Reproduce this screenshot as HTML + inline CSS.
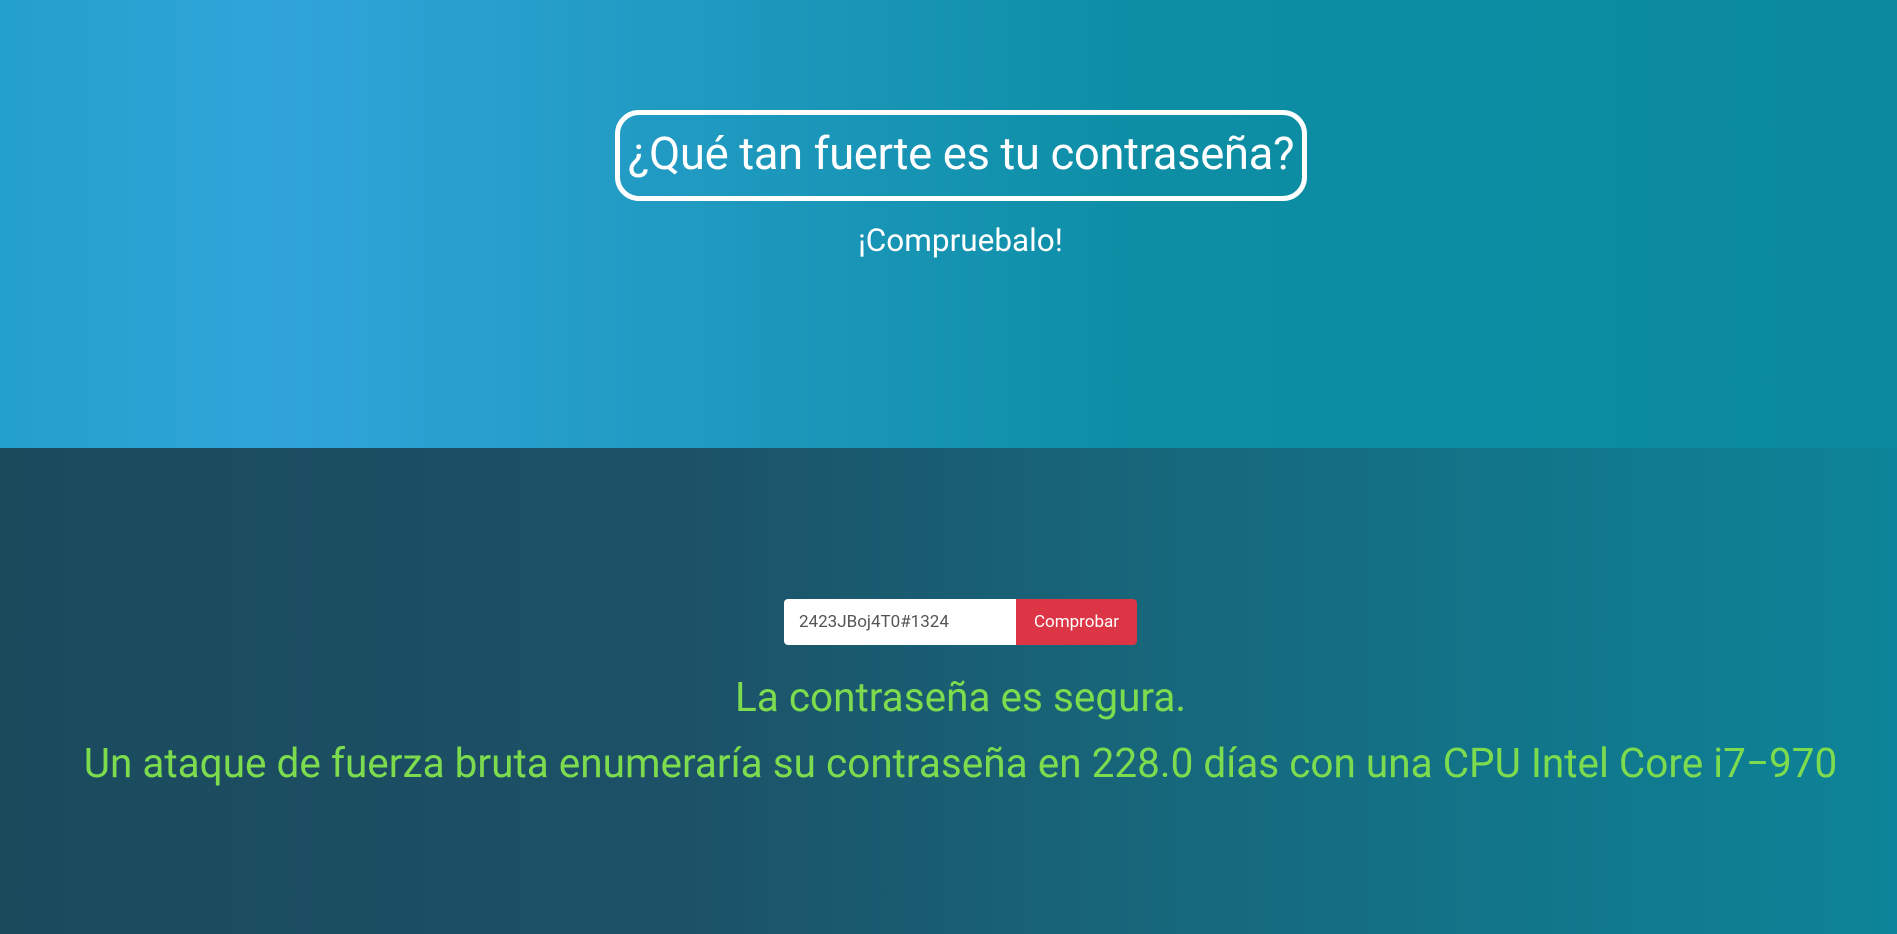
<!DOCTYPE html>
<html><head><meta charset="utf-8"><style>
*{margin:0;padding:0;box-sizing:border-box}
html,body{width:1897px;height:934px;overflow:hidden;font-family:"Roboto","Liberation Sans",sans-serif}
.top{position:absolute;left:0;top:0;width:1897px;height:448px;background:linear-gradient(90deg,#24a0cc 0%,#30a4da 15%,#1d98bd 40%,#0d8ea5 60%,#0b8a9e 100%)}
.bot{position:absolute;left:0;top:448px;width:1897px;height:486px;background:linear-gradient(90deg,#1b4a5d 0%,#1c5167 35%,#166a7e 65%,#0d8499 100%)}
.title{position:absolute;left:615px;top:110px;width:692px;height:91px;border:5px solid #fff;border-radius:24px;color:#fff;font-size:45.5px;text-align:center;line-height:80px;letter-spacing:-0.4px;white-space:nowrap}
.sub{position:absolute;left:12px;width:1897px;top:222px;text-align:center;color:#fff;font-size:31.5px}
.inp{position:absolute;left:784px;top:599px;width:233px;height:46px;background:#fff;border-radius:4px 0 0 4px;color:#555;font-size:17px;line-height:46px;padding-left:15px}
.btn{position:absolute;left:1016px;top:599px;width:121px;height:46px;background:#dc3545;border-radius:0 4px 4px 0;color:#fff;font-size:17px;line-height:46px;text-align:center}
.g{position:absolute;left:12px;width:1897px;text-align:center;color:#7ddc4e;font-size:40.5px;white-space:nowrap}
</style></head><body>
<div class="top"></div><div class="bot"></div>
<div class="title">¿Qué tan fuerte es tu contraseña?</div>
<div class="sub">¡Compruebalo!</div>
<div class="inp">2423JBoj4T0#1324</div>
<div class="btn">Comprobar</div>
<div class="g" style="top:673px">La contraseña es segura.</div>
<div class="g" style="top:739px">Un ataque de fuerza bruta enumeraría su contraseña en 228.0 días con una CPU Intel Core i7−970</div>
</body></html>
